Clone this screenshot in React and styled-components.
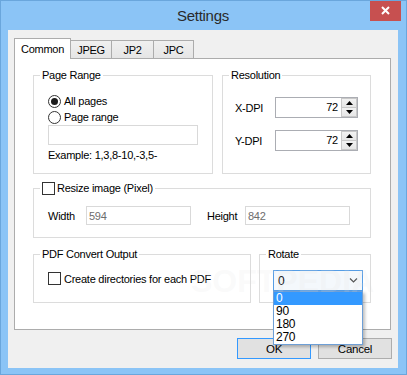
import React from 'react';
import styled, { createGlobalStyle } from 'styled-components';

const Global = createGlobalStyle`
  html, body { margin: 0; padding: 0; background: #8bc4f6; }
  body {
    font-family: "Liberation Sans", Arial, sans-serif;
    font-size: 11px;
    letter-spacing: -0.25px;
    color: #000;
  }
  * { box-sizing: border-box; }
`;

const Window = styled.div`
  position: relative;
  width: 407px;
  height: 375px;
  border: 1px solid #6aa6dc;
  background: #8bc4f6;
  padding: 0 8px 6px 7px;
  display: flex;
  flex-direction: column;
  overflow: hidden;
`;

const TitleBar = styled.div`
  height: 29px;
  display: grid;
  grid-template-columns: 1fr auto 1fr;
  align-items: center;
`;

const Title = styled.div`
  grid-column: 2;
  font-size: 15px;
  letter-spacing: -0.3px;
  color: #2a2a2a;
`;

const CloseButton = styled.div`
  grid-column: 3;
  justify-self: end;
  align-self: start;
  margin-top: -1px;
  margin-right: -3px;
  width: 31px;
  height: 21px;
  background: #c75050;
  display: flex;
  align-items: center;
  justify-content: center;
`;

const Client = styled.div`
  flex: 1;
  background: #f0f0f0;
  padding: 8px 7px 0 6px;
  display: flex;
  flex-direction: column;
`;

const TabStrip = styled.div`
  height: 20px;
  display: flex;
  align-items: flex-end;
`;

const Tab = styled.div`
  position: relative;
  z-index: ${p => (p.$active ? 2 : 1)};
  width: ${p => p.$w}px;
  height: ${p => (p.$active ? 21 : 18)}px;
  margin-bottom: ${p => (p.$active ? -1 : 0)}px;
  margin-left: ${p => (p.$first ? 0 : -1)}px;
  border: 1px solid #acacac;
  border-bottom: none;
  background: ${p => (p.$active ? '#fff' : 'linear-gradient(#f0f0f0, #e5e5e5)')};
  display: flex;
  align-items: center;
  justify-content: center;
  padding-bottom: ${p => (p.$active ? 1 : 0)}px;
`;

const Panel = styled.div`
  width: 377px;
  height: 272px;
  border: 1px solid #acacac;
  background: #fff;
  padding: 16px 0 0 18px;
  display: flex;
  flex-direction: column;
`;

const Row = styled.div`
  display: flex;
  gap: ${p => p.$gap || 0}px;
  margin-top: ${p => p.$mt || 0}px;
`;

const Group = styled.div`
  position: relative;
  width: ${p => p.$w}px;
  height: ${p => p.$h}px;
  border: 1px solid #dcdcdc;
  padding: ${p => p.$pad};
  display: flex;
  flex-direction: column;
`;

const Legend = styled.div`
  position: absolute;
  top: -7px;
  left: 6px;
  height: 13px;
  line-height: 13px;
  padding: 0 2px;
  background: #fff;
  display: flex;
  align-items: center;
  gap: 2px;
  white-space: nowrap;
`;

const RadioRow = styled.div`
  height: 16px;
  display: flex;
  align-items: center;
  gap: 3px;
`;

const Radio = styled.span`
  position: relative;
  width: 13px;
  height: 13px;
  border-radius: 50%;
  border: 1px solid #333;
  background: #fff;
  flex: none;
  &::after {
    content: '';
    display: ${p => (p.$checked ? 'block' : 'none')};
    position: absolute;
    left: 2px;
    top: 2px;
    width: 7px;
    height: 7px;
    border-radius: 50%;
    background: #1b1b1b;
  }
`;

const Check = styled.span`
  width: 13px;
  height: 13px;
  border: 1px solid #333;
  background: #fff;
  flex: none;
`;

const CheckRow = styled.div`
  height: 13px;
  display: flex;
  align-items: center;
  gap: 3px;
`;

const TextBox = styled.div`
  width: ${p => p.$w}px;
  height: ${p => p.$h || 20}px;
  border: 1px solid #d9d9d9;
  background: #fff;
  color: #6d6d6d;
  padding-left: 2px;
  display: flex;
  align-items: center;
  flex: none;
`;

const Hint = styled.div`
  margin-top: 4px;
  line-height: 12px;
`;

const FieldRow = styled.div`
  display: flex;
  align-items: center;
  margin-top: ${p => p.$mt || 0}px;
`;

const FieldLabel = styled.div`
  width: ${p => p.$w}px;
  flex: none;
`;

const Spin = styled.div`
  width: 83px;
  height: 21px;
  border: 1px solid #abadb3;
  background: #fff;
  display: flex;
`;

const SpinValue = styled.div`
  flex: 1;
  text-align: right;
  padding-right: 3px;
  line-height: 19px;
`;

const SpinButtons = styled.div`
  width: 16px;
  display: flex;
  flex-direction: column;
`;

const SpinButton = styled.div`
  flex: 1;
  border: 1px solid #c8c8c8;
  margin-top: ${p => (p.$down ? -1 : 0)}px;
  background: linear-gradient(#f2f2f2, #e6e6e6);
  display: flex;
  align-items: center;
  justify-content: center;
`;

const ComboWrap = styled.div`
  position: relative;
  width: 90px;
  height: 21px;
`;

const Combo = styled.div`
  width: 100%;
  height: 100%;
  border: 1px solid #569de5;
  background: #f4f8fc;
  display: flex;
  align-items: center;
  justify-content: space-between;
  padding: 0 4px 0 4px;
  font-size: 12px;
`;

const List = styled.div`
  position: absolute;
  z-index: 20;
  top: 100%;
  left: 0;
  width: 90px;
  border: 1px solid #6e9fd6;
  background: #fff;
  box-shadow: 2px 2px 3px rgba(0, 0, 0, 0.25);
`;

const Item = styled.div`
  height: 13px;
  line-height: 13px;
  padding-left: 2px;
  font-size: 12px;
  background: ${p => (p.$selected ? '#3399ff' : 'transparent')};
  color: ${p => (p.$selected ? '#fff' : '#000')};
`;

const ButtonRow = styled.div`
  margin-top: 8px;
  margin-right: -1px;
  display: flex;
  justify-content: flex-end;
  gap: 7px;
`;

const Button = styled.div`
  width: 74px;
  height: 21px;
  border: 1px solid ${p => (p.$default ? '#3399ff' : '#adadad')};
  background: #e1e1e1;
  display: flex;
  align-items: center;
  justify-content: center;
  font-size: 11.5px;
`;

const Watermark = styled.div`
  position: absolute;
  z-index: 30;
  left: 190px;
  top: 262px;
  font-size: 32px;
  font-weight: bold;
  letter-spacing: 0;
  color: rgba(225, 225, 225, 0.18);
  pointer-events: none;
  white-space: nowrap;
`;

const Up = () => (
  <svg width="7" height="4" viewBox="0 0 7 4"><path d="M0 4 L3.5 0 L7 4 Z" fill="#000" /></svg>
);
const Down = () => (
  <svg width="7" height="4" viewBox="0 0 7 4"><path d="M0 0 L7 0 L3.5 4 Z" fill="#000" /></svg>
);

const SpinBox = ({ value }) => (
  <Spin>
    <SpinValue>{value}</SpinValue>
    <SpinButtons>
      <SpinButton><Up /></SpinButton>
      <SpinButton $down><Down /></SpinButton>
    </SpinButtons>
  </Spin>
);

export default function App() {
  return (
    <>
      <Global />
      <Window>
        <TitleBar>
          <Title>Settings</Title>
          <CloseButton>
            <svg width="9" height="9" viewBox="0 0 9 9">
              <path d="M1 1 L8 8 M8 1 L1 8" stroke="#fff" strokeWidth="2" />
            </svg>
          </CloseButton>
        </TitleBar>
        <Client>
          <TabStrip>
            <Tab $active $first $w={57}>Common</Tab>
            <Tab $w={42}>JPEG</Tab>
            <Tab $w={43}>JP2</Tab>
            <Tab $w={41}>JPC</Tab>
          </TabStrip>
          <Panel>
            <Row $gap={9}>
              <Group $w={180} $h={99} $pad="17px 0 0 14px">
                <Legend>Page Range</Legend>
                <RadioRow><Radio $checked />All pages</RadioRow>
                <RadioRow><Radio />Page range</RadioRow>
                <TextBox $w={150} $h={20} />
                <Hint>Example: 1,3,8-10,-3,5-</Hint>
              </Group>
              <Group $w={149} $h={99} $pad="21px 0 0 12px">
                <Legend>Resolution</Legend>
                <FieldRow>
                  <FieldLabel $w={40}>X-DPI</FieldLabel>
                  <SpinBox value="72" />
                </FieldRow>
                <FieldRow $mt={12}>
                  <FieldLabel $w={40}>Y-DPI</FieldLabel>
                  <SpinBox value="72" />
                </FieldRow>
              </Group>
            </Row>
            <Row $mt={14}>
              <Group $w={338} $h={50} $pad="17px 0 0 14px">
                <Legend><Check />Resize image (Pixel)</Legend>
                <FieldRow>
                  <FieldLabel $w={38}>Width</FieldLabel>
                  <TextBox $w={105} $h={19}>594</TextBox>
                  <FieldLabel $w={16} />
                  <FieldLabel $w={38}>Height</FieldLabel>
                  <TextBox $w={105} $h={19}>842</TextBox>
                </FieldRow>
              </Group>
            </Row>
            <Row $mt={16} $gap={8}>
              <Group $w={218} $h={49} $pad="17px 0 0 14px">
                <Legend>PDF Convert Output</Legend>
                <CheckRow><Check />Create directories for each PDF</CheckRow>
              </Group>
              <Group $w={112} $h={49} $pad="15px 0 0 13px">
                <Legend>Rotate</Legend>
                <ComboWrap>
                  <Combo>
                    <span>0</span>
                    <svg width="9" height="5" viewBox="0 0 9 5">
                      <path d="M1 0.5 L4.5 4 L8 0.5" stroke="#555" strokeWidth="1.2" fill="none" />
                    </svg>
                  </Combo>
                  <List>
                    <Item $selected>0</Item>
                    <Item>90</Item>
                    <Item>180</Item>
                    <Item>270</Item>
                  </List>
                </ComboWrap>
              </Group>
            </Row>
          </Panel>
          <ButtonRow>
            <Button $default>OK</Button>
            <Button>Cancel</Button>
          </ButtonRow>
        </Client>
        <Watermark>SOFTPEDIA</Watermark>
      </Window>
    </>
  );
}
